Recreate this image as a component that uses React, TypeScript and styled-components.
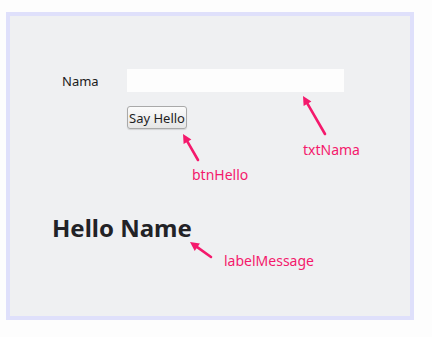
import React from 'react'
import styled, { createGlobalStyle } from 'styled-components'

const GlobalStyle = createGlobalStyle`
  html, body {
    margin: 0;
    padding: 0;
    background: #fdfdfd;
  }
  body {
    font-family: "Noto Sans", "Open Sans", sans-serif;
  }
`

const Page = styled.div`
  position: relative;
  width: 432px;
  height: 337px;
  overflow: hidden;
`

const Frame = styled.div`
  box-sizing: border-box;
  width: 408px;
  height: 308px;
  margin: 12px 0 0 6px;
  border: 4px solid #dfe0fb;
  background: #eff0f2;
  padding: 53px 0 0 42px;
`

const FormGrid = styled.div`
  display: grid;
  grid-template-columns: 75px 217px;
  row-gap: 14px;
  align-items: center;
`

const FieldLabel = styled.label`
  padding-left: 10px;
  font-size: 13px;
  color: #1b1b1b;
`

const TextField = styled.div`
  height: 23px;
  background: #fdfdfd;
`

const Button = styled.button`
  grid-column: 2;
  justify-self: start;
  box-sizing: border-box;
  width: 60px;
  height: 23px;
  padding: 0;
  border: 1px solid #a9a9a9;
  border-radius: 3px;
  background: linear-gradient(#fbfbfb, #e6e6e6);
  box-shadow: 0 1px 1px rgba(0, 0, 0, 0.12);
  font-family: "Noto Sans", sans-serif;
  font-size: 13px;
  color: #1e1e1e;
`

const Message = styled.h1`
  margin: 83px 0 0 0;
  font-size: 24px;
  line-height: 32px;
  font-weight: 700;
  color: #222226;
`

const Overlay = styled.svg`
  position: absolute;
  left: 0;
  top: 0;
  pointer-events: none;
`

const Callout = styled.span<{ $x: number; $y: number }>`
  position: absolute;
  left: ${p => p.$x}px;
  top: ${p => p.$y}px;
  font-size: 14px;
  color: #f4196c;
  white-space: nowrap;
`

const PINK = '#f4196c'

interface ArrowProps {
  tip: [number, number]
  tail: [number, number]
}

const Arrow = ({ tip, tail }: ArrowProps) => {
  const [tx, ty] = tip
  const [sx, sy] = tail
  const len = Math.hypot(tx - sx, ty - sy)
  const ux = (tx - sx) / len
  const uy = (ty - sy) / len
  const head = 9
  const half = 4.5
  const bx = tx - ux * head
  const by = ty - uy * head
  const p1 = `${bx - uy * half},${by + ux * half}`
  const p2 = `${bx + uy * half},${by - ux * half}`
  return (
    <g>
      <line x1={sx} y1={sy} x2={bx + ux} y2={by + uy} stroke={PINK} strokeWidth={2.6} strokeLinecap="round" />
      <polygon points={`${tx},${ty} ${p1} ${p2}`} fill={PINK} />
    </g>
  )
}

const annotations = [
  { name: 'txtNama', x: 303, y: 140, tip: [303, 96], tail: [325, 134] },
  { name: 'btnHello', x: 192, y: 165, tip: [183, 134], tail: [198, 160] },
  { name: 'labelMessage', x: 224, y: 251, tip: [190, 242], tail: [211, 257] }
] as const

const App = () => (
  <Page>
    <GlobalStyle />
    <Frame>
      <FormGrid>
        <FieldLabel>Nama</FieldLabel>
        <TextField />
        <Button>Say Hello</Button>
      </FormGrid>
      <Message>Hello Name</Message>
    </Frame>
    <Overlay width={432} height={337} viewBox="0 0 432 337">
      {annotations.map(a => (
        <Arrow key={a.name} tip={[a.tip[0], a.tip[1]]} tail={[a.tail[0], a.tail[1]]} />
      ))}
    </Overlay>
    {annotations.map(a => (
      <Callout key={a.name} $x={a.x} $y={a.y}>{a.name}</Callout>
    ))}
  </Page>
)

export default App
